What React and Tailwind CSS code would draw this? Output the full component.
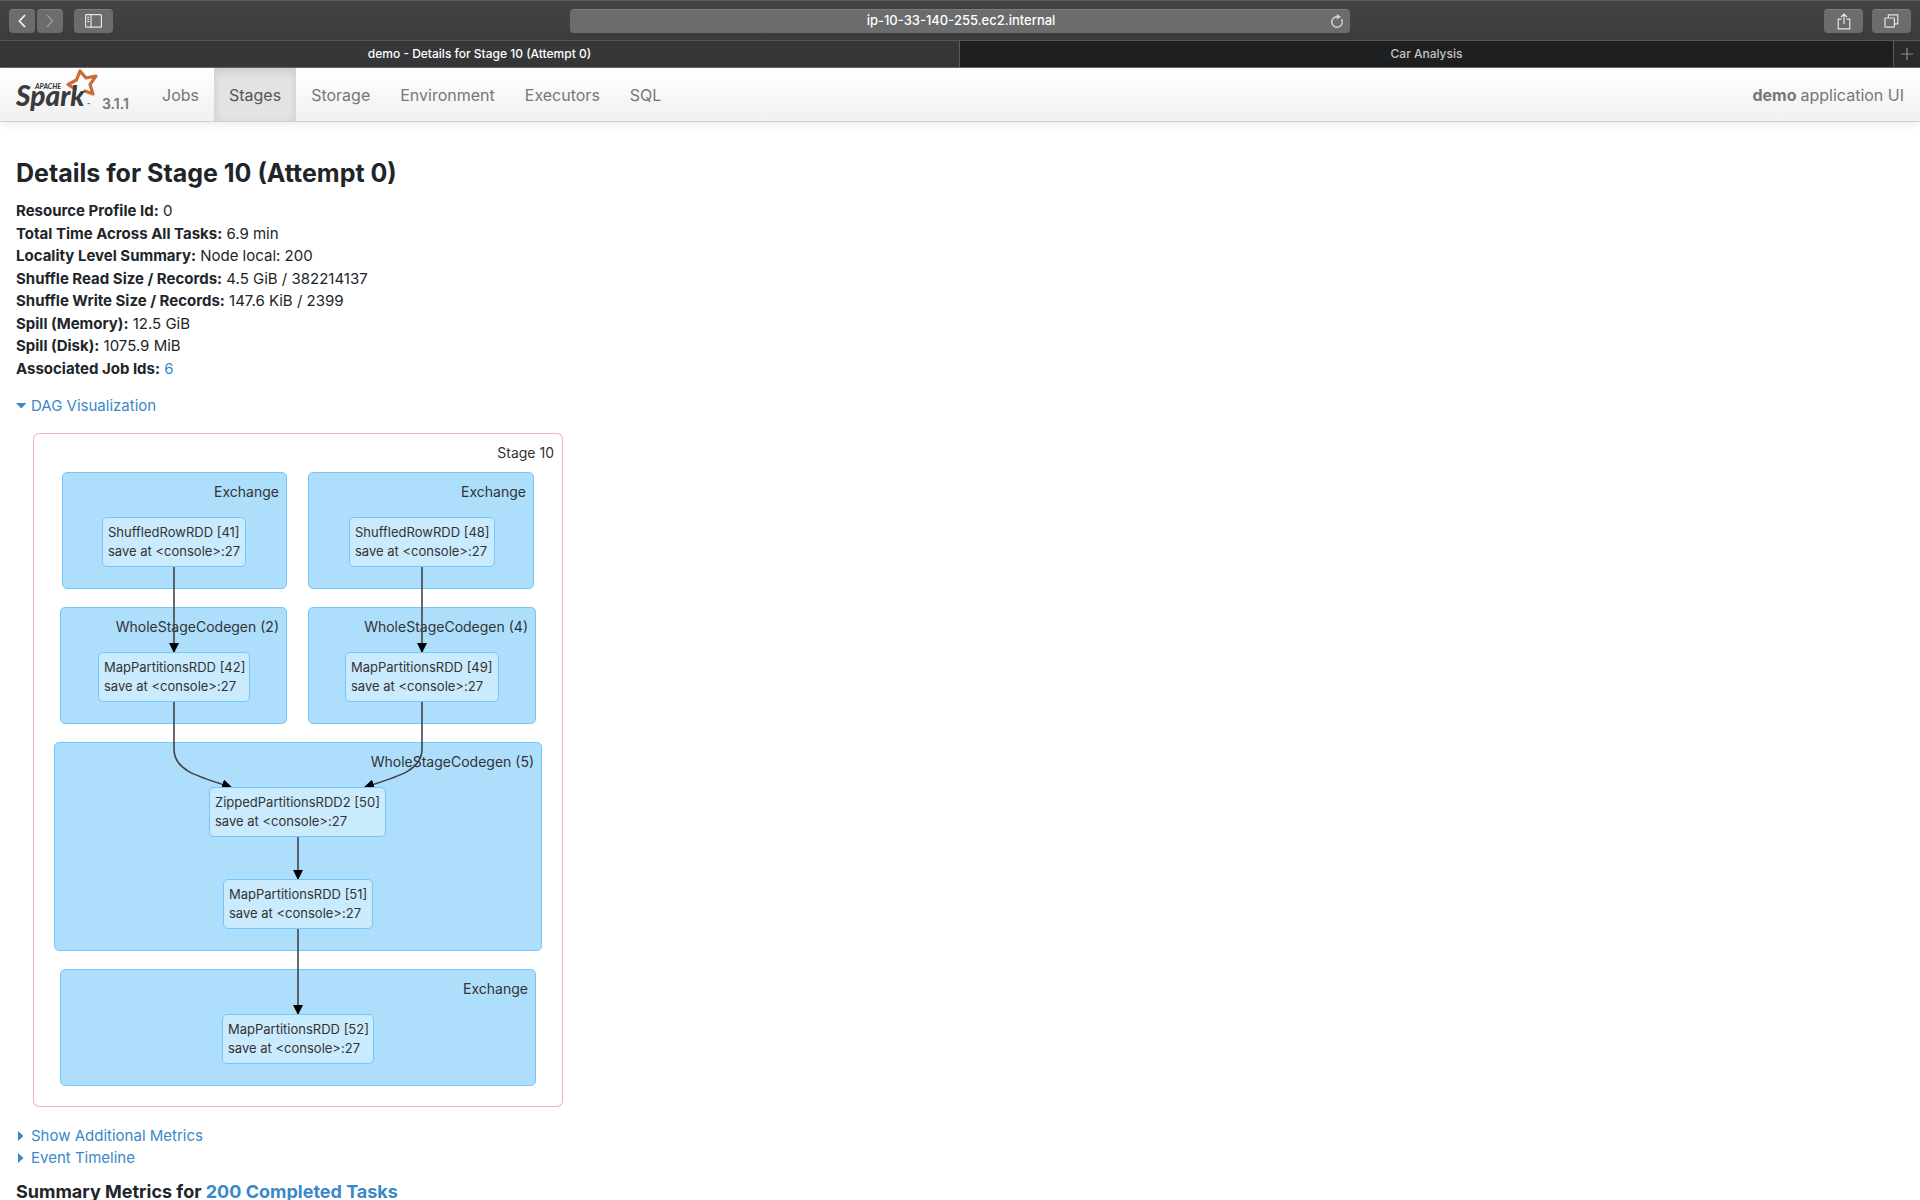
const CLUSTERS = [
  { label: "Exchange", box: "left-[29px] top-[39px] w-[225px] h-[117px]" },
  { label: "Exchange", box: "left-[275px] top-[39px] w-[226px] h-[117px]" },
  { label: "WholeStageCodegen (2)", box: "left-[27px] top-[174px] w-[227px] h-[117px]" },
  { label: "WholeStageCodegen (4)", box: "left-[275px] top-[174px] w-[228px] h-[117px]" },
  { label: "WholeStageCodegen (5)", box: "left-[21px] top-[309px] w-[488px] h-[209px]" },
  { label: "Exchange", box: "left-[27px] top-[536px] w-[476px] h-[117px]" },
];

const NODES = [
  { label: "ShuffledRowRDD [41]", box: "left-[69px] top-[84px] w-[144px]" },
  { label: "ShuffledRowRDD [48]", box: "left-[316px] top-[84px] w-[146px]" },
  { label: "MapPartitionsRDD [42]", box: "left-[65px] top-[219px] w-[152px]" },
  { label: "MapPartitionsRDD [49]", box: "left-[312px] top-[219px] w-[154px]" },
  { label: "ZippedPartitionsRDD2 [50]", box: "left-[176px] top-[354px] w-[177px]" },
  { label: "MapPartitionsRDD [51]", box: "left-[190px] top-[446px] w-[150px]" },
  { label: "MapPartitionsRDD [52]", box: "left-[189px] top-[581px] w-[152px]" },
];

const EDGES = [
  "M140 134V219",
  "M388 134V219",
  "M140 269V316C140 337 162 343 197 354",
  "M388 269V316C388 337 366 343 331 354",
  "M264 404V446",
  "M264 496V581",
];

const DETAILS = [
  ["Resource Profile Id:", "0"],
  ["Total Time Across All Tasks:", "6.9 min"],
  ["Locality Level Summary:", "Node local: 200"],
  ["Shuffle Read Size / Records:", "4.5 GiB / 382214137"],
  ["Shuffle Write Size / Records:", "147.6 KiB / 2399"],
  ["Spill (Memory):", "12.5 GiB"],
  ["Spill (Disk):", "1075.9 MiB"],
];

const NAV = ["Jobs", "Stages", "Storage", "Environment", "Executors", "SQL"];

function ToolButton({ label, className, children }) {
  return (
    <button
      type="button"
      aria-label={label}
      className={`flex h-6 items-center justify-center rounded border-t border-[#7b7c7e] bg-[#6b6c6e] ${className}`}
    >
      {children}
    </button>
  );
}

function BrowserChrome() {
  return (
    <header className="shrink-0">
      <div className="flex h-[41px] items-center justify-between border-t border-b border-t-[#5e5f62] border-b-[#555658] bg-linear-to-b from-[#434446] to-[#3a3b3d] px-[9px]">
        <div className="flex flex-1 items-center">
          <ToolButton label="Back" className="w-[26px] text-[#f0f0f0]">
            <svg width="8" height="14" viewBox="0 0 8 14" fill="none" stroke="currentColor" strokeWidth="1.8">
              <path d="M7 1L1.5 7L7 13" />
            </svg>
          </ToolButton>
          <ToolButton label="Forward" className="ml-0.5 w-[26px] text-[#98999b]">
            <svg width="8" height="14" viewBox="0 0 8 14" fill="none" stroke="currentColor" strokeWidth="1.5">
              <path d="M1 1L6.5 7L1 13" />
            </svg>
          </ToolButton>
          <ToolButton label="Show sidebar" className="ml-[11px] w-[39px] text-[#e4e4e5]">
            <svg width="17" height="14" viewBox="0 0 17 14" fill="none" stroke="currentColor" strokeWidth="1.2">
              <rect x="0.6" y="0.6" width="15.8" height="12.6" rx="0.6" />
              <path d="M6 1V13M2.3 3.3H4.2M2.3 5.5H4.2M2.3 7.7H4.2" />
            </svg>
          </ToolButton>
        </div>
        <div className="flex h-6 w-[41%] items-center rounded border-t border-[#7b7c7e] bg-[#6b6c6e] px-1.5">
          <input
            aria-label="Address"
            defaultValue="ip-10-33-140-255.ec2.internal"
            className="min-w-0 flex-1 bg-transparent pl-4 text-center text-[13px] font-medium text-white outline-none"
          />
          <button type="button" aria-label="Reload" className="text-[#d5d5d6]">
            <svg width="14" height="15" viewBox="0 0 14 15" fill="none" stroke="currentColor" strokeWidth="1.4">
              <path d="M11.6 5.3A5.3 5.3 0 1 1 7 2.7" />
              <path d="M6.8 0L11 2.8L6.8 5.6Z" fill="currentColor" stroke="none" />
            </svg>
          </button>
        </div>
        <div className="flex flex-1 items-center justify-end gap-[9px]">
          <ToolButton label="Share" className="w-[39px] text-[#e4e4e5]">
            <svg width="14" height="17" viewBox="0 0 14 17" fill="none" stroke="currentColor" strokeWidth="1.2">
              <path d="M4.5 6.2H1.2V15.8H12.8V6.2H9.5M7 11V1.2M4 4L7 1L10 4" />
            </svg>
          </ToolButton>
          <ToolButton label="Show all tabs" className="w-[39px] text-[#e4e4e5]">
            <svg width="15" height="14" viewBox="0 0 15 14" fill="none" stroke="currentColor" strokeWidth="1.2">
              <rect x="1" y="4" width="9.4" height="9.2" rx="0.6" />
              <path d="M4.4 3.6V0.8H13.8V9.8H11" />
            </svg>
          </ToolButton>
        </div>
      </div>
      <div role="tablist" className="flex h-[27px] border-b border-[#6b6a6c] bg-[#1e1f21] text-[12px] font-medium">
        <button type="button" role="tab" aria-selected="true" className="flex-[959] border-r border-[#5a5b5d] bg-[#363739] text-white">
          demo - Details for Stage 10 (Attempt 0)
        </button>
        <button type="button" role="tab" aria-selected="false" className="flex-[933] text-[#c4c4c5]">
          Car Analysis
        </button>
        <button type="button" aria-label="New tab" className="flex w-[27px] items-center justify-center border-l border-[#5a5b5d] bg-[#2a2b2d] text-[#8c8d8f]">
          <svg width="12" height="12" viewBox="0 0 12 12" stroke="currentColor" strokeWidth="1.2">
            <path d="M6 0V12M0 6H12" />
          </svg>
        </button>
      </div>
    </header>
  );
}

function SparkLogo() {
  return (
    <svg width="82" height="46" viewBox="0 0 82 46" role="img" aria-label="Apache Spark" fontFamily="Lato, sans-serif" fontStyle="italic" fontWeight="900" fill="#3c3a3e">
      <path d="M59 21L52 16.5L60.5 12L64 3L70 10L80 8L74 16.5L77 26L69 23" fill="none" stroke="#cb6b36" strokeWidth="3.2" strokeLinejoin="round" strokeLinecap="round" />
      <text x="0" y="38" fontSize="28">Spark</text>
      <text x="19" y="21" fontSize="7">APACHE</text>
      <text x="71" y="38" fontSize="4">™</text>
    </svg>
  );
}

function NavBar() {
  return (
    <nav className="flex h-[54px] shrink-0 items-stretch border-b border-[#d0d0d0] bg-linear-to-b from-white to-[#f0f0f0] px-4 text-[16px] text-[#777777] shadow-[0_1px_10px_rgba(0,0,0,0.1)]">
      <a href="#spark" className="flex w-[131px] items-start">
        <SparkLogo />
        <span className="ml-1 pt-7 text-[14px] leading-4 font-semibold">3.1.1</span>
      </a>
      {NAV.map((name) => (
        <a
          key={name}
          href={`#${name}`}
          className={
            name === "Stages"
              ? "flex items-center bg-[#e3e3e3] px-[15px] text-[#555555] shadow-[inset_0_3px_8px_rgba(0,0,0,0.12)]"
              : "flex items-center px-[15px]"
          }
        >
          {name}
        </a>
      ))}
      <p className="ml-auto flex items-center gap-1">
        <strong className="font-bold">demo</strong> application UI
      </p>
    </nav>
  );
}

function Dag() {
  return (
    <div className="relative mt-4 ml-[17px] h-[674px] w-[530px] rounded-md text-[#333333] ring-1 ring-[#f5b0bc] ring-inset">
      <span className="absolute top-[10px] right-[9px] text-[14px] leading-5">Stage 10</span>
      {CLUSTERS.map((c) => (
        <div key={c.box} className={`absolute rounded-[5px] border border-[#76c5fb] bg-[#addefc] ${c.box}`}>
          <span className="absolute top-[9px] right-[7px] text-[14px] leading-5 whitespace-nowrap">{c.label}</span>
        </div>
      ))}
      <svg className="absolute top-0 left-px" width="529" height="672" viewBox="0 0 529 672" fill="none" stroke="#444444" strokeWidth="1.6">
        <defs>
          <marker id="arrow" viewBox="0 0 10 10" refX="9" refY="5" markerWidth="10" markerHeight="10" markerUnits="userSpaceOnUse" orient="auto">
            <path d="M0 0L10 5L0 10Z" fill="#000000" stroke="none" />
          </marker>
        </defs>
        {EDGES.map((d) => (
          <path key={d} d={d} markerEnd="url(#arrow)" />
        ))}
      </svg>
      {NODES.map((n) => (
        <div key={n.label} className={`absolute h-[50px] rounded-[5px] border border-[#76c5fb] bg-[#caeafe] py-[5px] pl-[5px] text-[13px] leading-[19px] whitespace-nowrap ${n.box}`}>
          {n.label}
          <br />
          {"save at <console>:27"}
        </div>
      ))}
    </div>
  );
}

function Toggle({ open, children }) {
  return (
    <button type="button" aria-expanded={open} className="flex items-center text-[#3a88c8]">
      <svg width="15" height="10" viewBox="0 0 15 10" fill="currentColor">
        {open ? <path d="M0 2H10.5L5.25 7.5Z" /> : <path d="M2 0L7.5 5L2 10Z" />}
      </svg>
      {children}
    </button>
  );
}

export default function App() {
  return (
    <div className="flex h-screen flex-col overflow-hidden bg-white font-['Inter',sans-serif] text-[#212529]">
      <BrowserChrome />
      <NavBar />
      <main className="min-h-0 flex-1 overflow-hidden px-4 pt-[34px] text-[15px] leading-[22px]">
        <h3 className="text-[25px] leading-[34px] font-bold">Details for Stage 10 (Attempt 0)</h3>
        <ul className="mt-[10px]">
          {DETAILS.map(([name, value]) => (
            <li key={name} className="odd:leading-[22px] even:leading-[23px]">
              <strong className="font-bold">{name}</strong> {value}
            </li>
          ))}
          <li className="leading-[23px]">
            <strong className="font-bold">Associated Job Ids:</strong>{" "}
            <a href="#job-6" className="text-[#3a88c8]">6</a>
          </li>
        </ul>
        <div className="mt-[15px]">
          <Toggle open>DAG Visualization</Toggle>
        </div>
        <Dag />
        <div className="mt-[18px] flex flex-col items-start">
          <Toggle open={false}>Show Additional Metrics</Toggle>
          <Toggle open={false}>Event Timeline</Toggle>
        </div>
        <h4 className="mt-[11px] text-[18px] leading-6 font-bold">
          Summary Metrics for <a href="#tasks" className="text-[#3a88c8]">200 Completed Tasks</a>
        </h4>
      </main>
    </div>
  );
}
